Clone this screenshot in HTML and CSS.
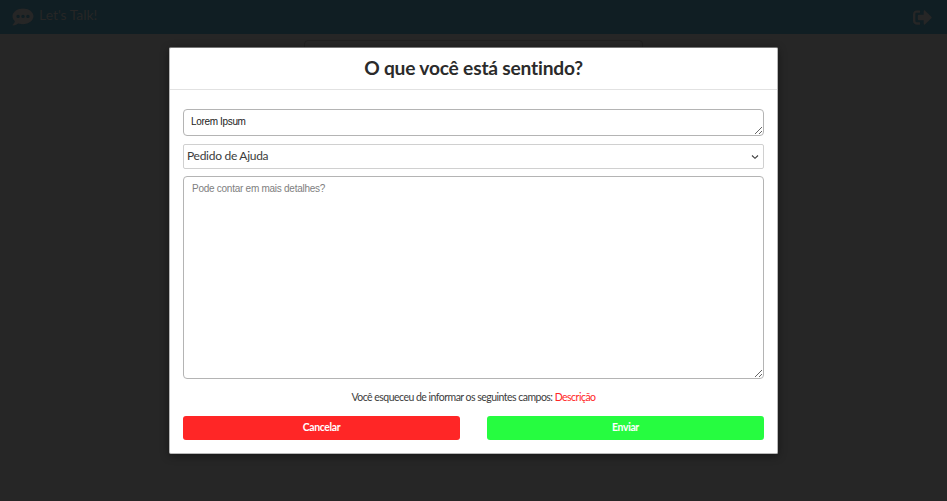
FILE: index.html
```html
<!DOCTYPE html>
<html lang="pt-BR">
<head>
<meta charset="utf-8">
<title>Let's Talk!</title>
<link rel="stylesheet" href="styles.css">
</head>
<body>
<header class="topbar">
  <div class="brand">
    <svg class="brand-icon" viewBox="0 0 22 18" aria-hidden="true"><path fill="currentColor" fill-rule="evenodd" d="M11 .5C5.200.5.5 3.900.5 8.300c0 1.900.9 3.600 2.400 4.900C2.500 15 .9 16.400.6 16.700c-.2.300 0 .7.4.7 2.400 0 4.300-1.200 5.300-1.900 1.400.5 3 .7 4.700.7 5.800 0 10.500-3.500 10.500-7.900S16.800.5 11 .5zM6.100 6.700a1.700 1.700 0 1 1 0 3.400 1.700 1.700 0 0 1 0-3.400zm4.900 0a1.700 1.700 0 1 1 0 3.400 1.700 1.700 0 0 1 0-3.400zm4.900 0a1.700 1.700 0 1 1 0 3.400 1.700 1.700 0 0 1 0-3.400z"/></svg>
    <span>Let's Talk!</span>
  </div>
  <svg class="exit-icon" viewBox="0 0 512 384" aria-hidden="true"><path fill="currentColor" d="M497 209 329 377c-15 15-41 4.500-41-17v-96H152c-13.300 0-24-10.700-24-24v-96c0-13.300 10.700-24 24-24h136V24c0-21.400 25.900-32 41-17l168 168c9.300 9.400 9.300 24.600 0 34zM192 372v-40c0-6.600-5.400-12-12-12H96c-17.700 0-32-14.300-32-32V96c0-17.700 14.300-32 32-32h84c6.600 0 12-5.400 12-12V12c0-6.600-5.400-12-12-12H96C43 0 0 43 0 96v192c0 53 43 96 96 96h84c6.600 0 12-5.400 12-12z"/></svg>
</header>
<main class="page"><div class="post"></div></main>
<section class="modal">
  <h1 class="modal-title">O que você está sentindo?</h1>
  <form class="form">
    <textarea class="field field-title">Lorem Ipsum</textarea>
    <div class="select">
      <span>Pedido de Ajuda</span>
      <svg class="chevron" viewBox="0 0 8 6" aria-hidden="true"><path d="M1 1.500 4 4.300 7 1.500" fill="none" stroke="currentColor" stroke-width="1.100"/></svg>
    </div>
    <textarea class="field field-details" placeholder="Pode contar em mais detalhes?"></textarea>
    <p class="warning">Você esqueceu de informar os seguintes campos: <span class="missing">Descrição</span></p>
    <div class="actions">
      <button type="button" class="button cancel">Cancelar</button>
      <button type="button" class="button send">Enviar</button>
    </div>
  </form>
</section>
</body>
</html>
```
FILE: styles.css
```css
* { box-sizing: border-box; }
body {
  margin: 0;
  height: 501px;
  overflow: hidden;
  background: #262626;
  font-family: Lato, sans-serif;
  font-variant-ligatures: none;
  color: #2b2b2b;
}
.topbar {
  height: 34px;
  padding: 0 15px 0 12px;
  display: flex;
  align-items: center;
  justify-content: space-between;
  background: #101e23;
  color: #262626;
}
.brand { display: flex; align-items: center; gap: 5px; font-size: 14px; letter-spacing: -.05px; }
.brand span { padding-bottom: 5px; }
.brand-icon { width: 22px; height: 18px; }
.exit-icon { width: 19px; height: 15px; }
.page { padding-top: 6px; }
.post {
  width: 339px;
  height: 120px;
  margin: 0 auto;
  border: 1px solid #202020;
  border-radius: 4px;
}
.modal {
  position: absolute;
  top: 47px;
  left: 169px;
  width: 609px;
  height: 407px;
  background: #fff;
  border: 1px solid #b8b8b8;
  border-top-color: #777;
  border-radius: 2px;
  box-shadow: 0 2px 8px rgba(0, 0, 0, .4);
}
.modal-title {
  margin: 0;
  height: 42px;
  border-bottom: 1px solid #e2e2e2;
  text-align: center;
  font-size: 19.200px;
  letter-spacing: -.2px;
  line-height: 39px;
  font-weight: 700;
}
.form {
  display: flex;
  flex-direction: column;
  padding: 19px 13px 0;
}
.field {
  display: block;
  width: 581px;
  margin: 0;
  border: 1px solid #b4b4b4;
  border-radius: 4px;
  font: 10px/12px "Liberation Sans", Arial, sans-serif;
  letter-spacing: -.26px;
  color: #222;
  resize: vertical;
  overflow: hidden;
  outline: none;
}
.field::placeholder { color: #808080; }
.field-title { height: 27px; padding: 6px 7px; letter-spacing: -.34px; }
.field-details { height: 203px; padding: 6px 8px; }
.select {
  height: 25px;
  margin: 8px 0 7px;
  padding: 0 4px 0 3px;
  border: 1px solid #d0d0d0;
  border-radius: 2px;
  display: flex;
  align-items: center;
  justify-content: space-between;
  font-size: 12px;
  letter-spacing: -.28px;
  color: #3c3c3c;
}
.select span { padding-bottom: 2px; }
.chevron { width: 8px; height: 6px; }
.warning {
  margin: 11px 0 0;
  text-align: center;
  font-size: 10.500px;
  letter-spacing: -.52px;
  line-height: 14px;
  color: #3c3c3c;
}
.missing { color: #ff2626; }
.actions {
  display: grid;
  grid-template-columns: 1fr 1fr;
  gap: 27px;
  margin-top: 12px;
}
.button {
  height: 24px;
  padding: 0 0 3px;
  border: 0;
  border-radius: 3px;
  color: #fff;
  font: 700 10.400px Lato, sans-serif;
  letter-spacing: -.35px;
}
.cancel { background: #ff2626; }
.send { background: #26fc40; }
```
